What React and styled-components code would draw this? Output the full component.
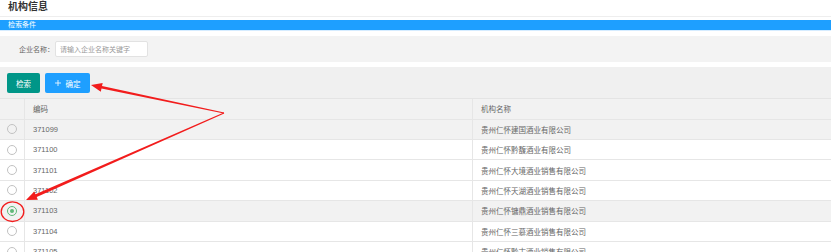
import React from "react";
import styled, { createGlobalStyle, css } from "styled-components";

const GlobalStyle = createGlobalStyle`
    body { margin: 0; background: #fff; font-family: "Liberation Sans", "Noto Sans CJK SC", sans-serif; }
    * { box-sizing: border-box; }
`;

const Page = styled.div`
    position: relative;
    width: 831px; height: 252px;
    overflow: hidden;
    color: #666;
    font-size: 7.5px;
`;
const Title = styled.h1`
    margin: 0; height: 17px;
    padding: 1px 0 0 8px;
    font-size: 10px; line-height: 11px; font-weight: bold; color: #333;
    border-bottom: 1px solid #eee;
`;
const SectionBar = styled.div`
    margin-top: 3px; height: 11px;
    padding-left: 8px;
    background: #1e9fff; color: #fff;
    font-size: 7px; line-height: 10px;
    border-bottom: 1px solid #d6ecff;
`;
const SearchPanel = styled.div`
    margin-top: 5px; height: 26px;
    background: #f3f3f3;
    display: flex; align-items: center;
    padding-left: 19px;
`;
const Label = styled.label`
    font-size: 7px; color: #666; margin-right: 1px;
`;
const Input = styled.input`
    width: 93px; height: 16px;
    border: 1px solid #e2e2e2; border-radius: 2px;
    background: #fff; padding: 0 4px;
    font: 7px "Liberation Sans", "Noto Sans CJK SC", sans-serif;
    &::placeholder { color: #999; }
`;
const Toolbar = styled.div`
    margin-top: 5px; height: 32px;
    background: #f0f0f0;
    border-bottom: 1px solid #e4e4e4;
    display: flex; gap: 5px;
    padding: 6px 0 0 7px;
`;
const Button = styled.button`
    height: 20px; padding: 0;
    border: none; border-radius: 2px;
    color: #fff; font: 7.5px "Liberation Sans", "Noto Sans CJK SC", sans-serif;
    display: flex; align-items: center; justify-content: center; gap: 5px;
    width: ${p => p.$w}px;
    background: ${p => p.$tone === "green" ? "#009688" : "#1e9fff"};
`;
const Row = styled.div`
    display: grid;
    grid-template-columns: 24px 448px 1fr;
    height: ${p => p.$head ? 20.6 : 20.4}px;
    border-bottom: 1px solid #e6e6e6;
    background: ${p => p.$shade ? "#f2f2f2" : "#fff"};
`;
const Cell = styled.div`
    display: flex; align-items: center;
    ${p => p.$radio ? css`justify-content: center; padding-left: 0;` : css`padding-left: 8px; border-left: 1px solid #e6e6e6;`}
    color: #666; font-size: 7.5px; white-space: nowrap;
`;
const Radio = styled.span`
    width: 10px; height: 10px; border-radius: 50%;
    border: 1px solid ${p => p.$on ? "#5fb878" : "#c2c2c2"};
    display: flex; align-items: center; justify-content: center;
    margin-left: -1px;
    &::after {
        content: ""; width: 4px; height: 4px; border-radius: 50%;
        background: ${p => p.$on ? "#5fb878" : "transparent"};
    }
`;
const Annotation = styled.svg`
    position: absolute; left: 0; top: 0;
    pointer-events: none;
`;

const rows = [
    ["371099", "贵州仁怀建国酒业有限公司", true],
    ["371100", "贵州仁怀黔馥酒业有限公司"],
    ["371101", "贵州仁怀大境酒业销售有限公司"],
    ["371102", "贵州仁怀天湖酒业销售有限公司"],
    ["371103", "贵州仁怀镛鼎酒业销售有限公司", true, true],
    ["371104", "贵州仁怀三慕酒业销售有限公司"],
    ["371105", "贵州仁怀黔古酒业销售有限公司"],
];

const App = () => (
    <Page>
        <GlobalStyle />
        <Title>机构信息</Title>
        <SectionBar>检索条件</SectionBar>
        <SearchPanel>
            <Label>企业名称：</Label>
            <Input placeholder="请输入企业名称关键字" />
        </SearchPanel>
        <Toolbar>
            <Button $tone="green" $w={33}>检索</Button>
            <Button $w={45}>
                <svg width="6" height="6" viewBox="0 0 6 6"><path d="M3 0v6M0 3h6" stroke="#fff" strokeWidth="0.8" /></svg>
                确定
            </Button>
        </Toolbar>
        <Row $head $shade>
            <Cell $radio />
            <Cell>编码</Cell>
            <Cell>机构名称</Cell>
        </Row>
        {rows.map(([code, name, shade, on]) => (
            <Row key={code} $shade={shade}>
                <Cell $radio><Radio $on={on} /></Cell>
                <Cell>{code}</Cell>
                <Cell>{name}</Cell>
            </Row>
        ))}
        <Annotation width="831" height="252">
            <polygon fill="#f21c1c" points="91,85 102.7,82.9 102.0,86.0 224.1,112.6 223.9,113.4 101.5,88.5 100.8,91.7" />
            <polygon fill="#f21c1c" points="26,200 34.3,191.5 35.5,194.2 223.8,112.6 224.2,113.4 36.7,197 37.9,199.7" />
            <ellipse cx="12.5" cy="211.7" rx="11.3" ry="9.8" fill="none" stroke="#f21c1c" strokeWidth="1.3" />
        </Annotation>
    </Page>
);

export default App;
